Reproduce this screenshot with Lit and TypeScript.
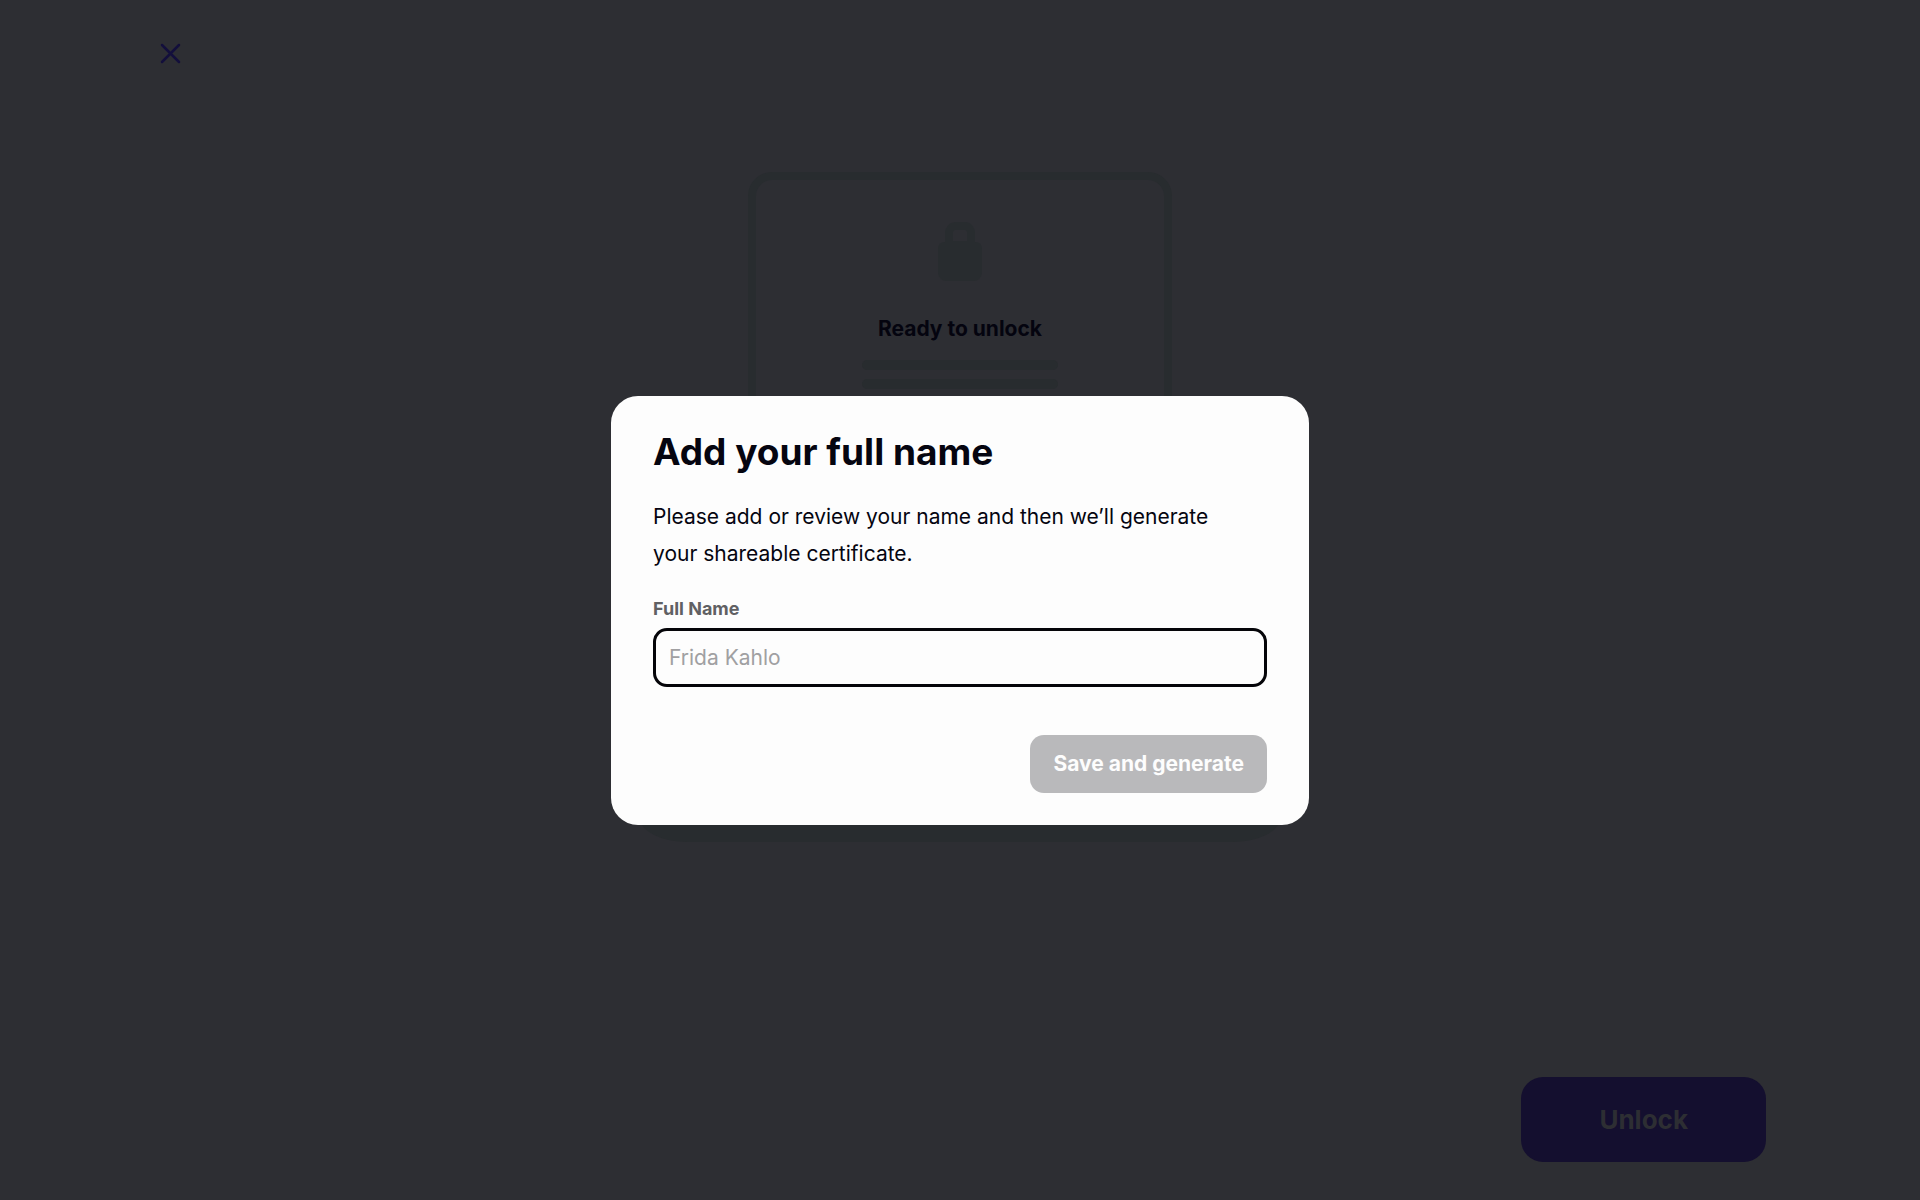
import { LitElement, html, css } from "lit";
import { customElement, state } from "lit/decorators.js";

@customElement("app-root")
export class AppRoot extends LitElement {
  @state() private fullName = "";

  static styles = css`
    :host {
      display: block;
      font-family: Inter, "Liberation Sans", sans-serif;
      color: #050510;
    }
    * {
      box-sizing: border-box;
    }
    button,
    input {
      font: inherit;
      margin: 0;
    }
    .page {
      min-height: 100vh;
      display: flex;
      flex-direction: column;
      background: #2d2e33;
    }
    .top {
      display: flex;
      padding: 37px 154px;
    }
    .close {
      display: flex;
      padding: 0;
      border: 0;
      background: none;
      color: #130f3c;
    }
    .stage {
      flex: 1;
      display: flex;
      flex-direction: column;
      align-items: center;
      padding-top: 66px;
    }
    .certificate {
      width: 424px;
      height: 640px;
      display: flex;
      flex-direction: column;
      align-items: center;
      padding-top: 41px;
      border: 8px solid #282c2f;
      border-bottom: 0;
      border-radius: 24px 24px 0 0;
    }
    .ready {
      margin: 34px 0 17px;
      font-size: 21px;
      line-height: 28px;
      font-weight: 700;
      color: #04040f;
    }
    .lines {
      display: flex;
      flex-direction: column;
      gap: 9px;
    }
    .line {
      width: 196px;
      height: 10px;
      border-radius: 5px;
      background: #282c2f;
    }
    .base {
      width: 640px;
      height: 30px;
      border-radius: 0 0 48px 48px / 0 0 24px 24px;
      background: #282c2f;
    }
    .bottom {
      display: flex;
      justify-content: flex-end;
      padding: 0 154px 38px;
    }
    .unlock {
      padding: 24px 78px;
      border: 0;
      border-radius: 22px;
      background: #140f2f;
      color: #2d2e33;
      font-size: 26px;
      line-height: 37px;
      font-weight: 700;
    }
    .overlay {
      position: fixed;
      inset: 0;
      display: grid;
      place-items: center;
      padding: 0 24px;
    }
    .dialog {
      width: 100%;
      max-width: 698px;
      margin-top: 20px;
      padding: 31px 42px 32px;
      border-radius: 27px;
      background: #fdfdfd;
    }
    .title {
      margin: 0 0 21px;
      font-size: 37px;
      line-height: 50px;
      font-weight: 700;
    }
    .text {
      max-width: 590px;
      margin: 0 0 25px;
      font-size: 21px;
      line-height: 37px;
    }
    .label {
      display: block;
      margin-bottom: 7px;
      font-size: 18px;
      line-height: 24px;
      font-weight: 700;
      color: #606063;
    }
    .input {
      display: block;
      width: 100%;
      height: 59px;
      padding: 0 13px;
      border: 3px solid #050509;
      border-radius: 14px;
      outline: none;
      background: #fdfdfd;
      color: #050510;
      font-size: 21px;
    }
    .input::placeholder {
      color: #a0a0a2;
      opacity: 1;
    }
    .actions {
      display: flex;
      justify-content: flex-end;
      margin-top: 48px;
    }
    .save {
      padding: 14px 23px;
      border: 0;
      border-radius: 14px;
      background: #050510;
      color: #fdfdfd;
      font-size: 21px;
      line-height: 30px;
      font-weight: 700;
    }
    .save:disabled {
      background: #b9b9bb;
    }
  `;

  private onInput(e: Event) {
    this.fullName = (e.target as HTMLInputElement).value;
  }

  render() {
    return html`
      <div class="page">
        <header class="top">
          <button class="close" type="button" aria-label="Close">
            <svg width="32" height="32" viewBox="0 0 32 32" fill="none" stroke="currentColor" stroke-width="2.5" stroke-linecap="round">
              <path d="M8 8 L25 25 M25 8 L8 25" />
            </svg>
          </button>
        </header>
        <main class="stage">
          <section class="certificate">
            <svg width="44" height="60" viewBox="0 0 44 60" fill="#282c2f" aria-hidden="true">
              <path fill-rule="evenodd" d="M7 21V12Q8 2 17 1H28Q36 2 37 12V21Q44 21 44 28V52Q43 59 36 60H8Q1 59 0 52V28Q0 21 7 21ZM15 20H29V11Q29 9 27 9H17Q15 9 15 11Z" />
            </svg>
            <h2 class="ready">Ready to unlock</h2>
            <div class="lines"><div class="line"></div><div class="line"></div></div>
          </section>
          <div class="base"></div>
        </main>
        <footer class="bottom">
          <button class="unlock" type="button">Unlock</button>
        </footer>
      </div>
      <div class="overlay">
        <form class="dialog" role="dialog" aria-modal="true" aria-labelledby="title">
          <h1 class="title" id="title">Add your full name</h1>
          <p class="text">Please add or review your name and then we’ll generate your shareable certificate.</p>
          <label class="label" for="name">Full Name</label>
          <input class="input" id="name" type="text" placeholder="Frida Kahlo" .value=${this.fullName} @input=${this.onInput} />
          <div class="actions">
            <button class="save" type="button" ?disabled=${!this.fullName.trim()}>Save and generate</button>
          </div>
        </form>
      </div>
    `;
  }
}
